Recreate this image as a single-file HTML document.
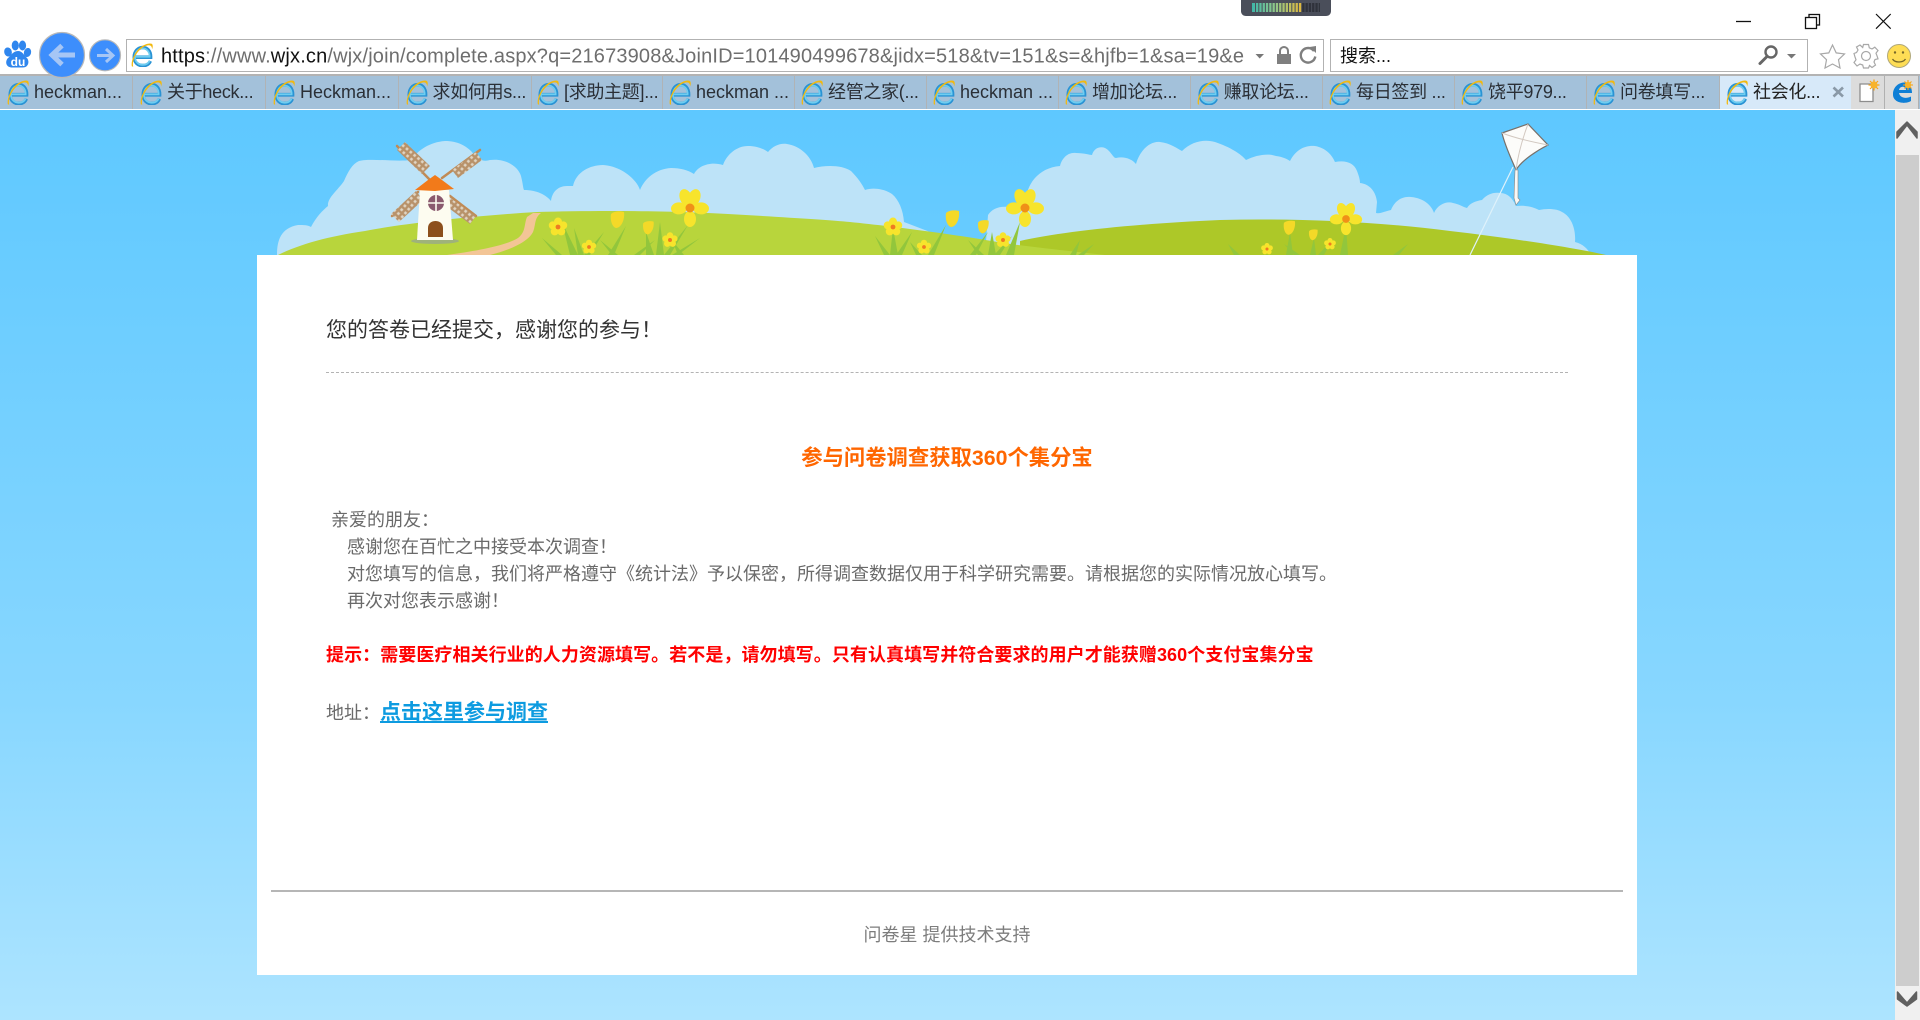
<!DOCTYPE html>
<html lang="zh-CN"><head><meta charset="utf-8"><title>问卷星</title>
<style>
html,body{margin:0;padding:0;width:1920px;height:1020px;overflow:hidden;background:#fff}
body{position:relative;font-family:"Liberation Sans","Noto Sans CJK SC",sans-serif}
.a{position:absolute;white-space:nowrap}
#page{position:absolute;left:0;top:110px;width:1895px;height:910px;background:linear-gradient(#5ec8ff 0%,#88d7ff 65%,#ade4ff 100%)}
#bar{position:absolute;left:0;top:74px;width:1920px;height:35px;background:#a3c1da;border-top:2px solid #b3b3b3;box-sizing:border-box}
.t{position:absolute;top:76px;height:33px;width:131px;border-right:1px solid #b0b3b5;box-sizing:content-box}
.t svg{position:absolute;left:6px;top:4px}
.t span{position:absolute;left:33px;top:3px;font-size:18px;line-height:26px;color:#2a2f36;white-space:nowrap}
.t span.c{letter-spacing:-.3px}
#panel{position:absolute;left:257px;top:255px;width:1380px;height:720px;background:#fff}
</style></head><body>
<div id="page"></div>

<svg class="a" style="left:0;top:0" width="1920" height="1020" viewBox="0 0 1920 1020">
<defs>
<pattern id="grid" width="5" height="5" patternUnits="userSpaceOnUse" patternTransform="rotate(40)"><rect width="5" height="5" fill="#b8926a"/><rect x="1.2" y="1.2" width="2.6" height="2.6" fill="#e0d5c3"/></pattern>
<g id="flw"><g fill="#f7e42c"><ellipse cx="0" cy="-11" rx="6" ry="9" transform="rotate(-22)"/><ellipse cx="0" cy="-11" rx="6" ry="9" transform="rotate(22)"/><ellipse cx="0" cy="-11" rx="6" ry="8" transform="rotate(92)"/><ellipse cx="0" cy="-11" rx="6" ry="8" transform="rotate(-92)"/><ellipse cx="0" cy="11" rx="6" ry="8"/></g><circle r="4.5" fill="#f09018"/></g>
<g id="sf"><g fill="#f7e42c"><circle cy="-5" r="3.6"/><circle cx="4.8" cy="-1.5" r="3.6"/><circle cx="3" cy="4" r="3.6"/><circle cx="-3" cy="4" r="3.6"/><circle cx="-4.8" cy="-1.5" r="3.6"/></g><circle r="2.2" fill="#ef7a22"/></g>
<g id="tul"><path d="M-6-6 C-3-9 3-9 7-8 C8 0 4 8-1 8 C-5 7-7 0-6-6Z" fill="#f4d928"/></g>
<g id="ie">
<path d="M4.700 14.200 H21.500 C21.700 8 17.500 4.500 12.800 4.500 C7.400 4.500 3.400 8.800 3.400 14 C3.400 19.200 7.400 22.600 12.800 22.600 C16.600 22.600 19.800 21 21.200 18" fill="none" stroke="#2a93d4" stroke-width="3.600"/>
<path d="M5 13.700 H20.400 C20.500 8.800 17 5.400 12.800 5.400 C8 5.400 4.300 9.300 4.300 14 C4.300 18.700 8 21.800 12.800 21.800 C16 21.800 19 20.400 20.400 17.800" fill="none" stroke="#6fcdf0" stroke-width="1.800"/>
<path d="M1 23.500 C-.5 19 3.600 9 10.400 4.200 C14.800 1.200 20 -.2 22.600 .8 C24 1.600 24 4 23 6.200 C22.900 3.800 21.800 2.300 19.400 2.300 C14.600 2.300 8.300 7 5 12.400 C2.800 16 1.400 20.600 2.400 23.500 Z" fill="#f2b90f"/>
</g>
</defs>

<!-- clouds -->
<path fill="#bde3f8" d="M277 255 C277 240 281 228 298 225 C304 225 308 225 311 227 C316 217 323 210 328 206 C327 198 338 190 344 181 C348 172 352 164 359 161 C370 158 395 162 411 160 C418 150 430 142 445 141 C458 141 466 146 472 152 C477 160 484 162 490 160 C505 158 518 166 521 176 C523 184 523 188 524 190 C537 190 546 195 551 201 C552 192 558 186 567 186 L573 186 C576 172 590 165 603 165 C620 166 636 178 640 190 C645 178 656 169 671 168 C680 168 688 170 694 174 C698 166 710 161 723 165 C727 154 737 146 748 146 C757 146 764 149 768 152 C773 146 780 143 787 144 C800 146 811 156 814 168 C826 165 842 165 851 171 C858 178 862 184 865 190 C873 187 885 189 892 194 C899 200 903 210 904 222 L990 255 Z"/>
<path fill="#bde3f8" d="M985 255 L988 215 C992 209 999 206 1008 207 L1026 207 C1024 188 1036 168 1060 166 C1062 158 1068 152 1076 153 C1084 153 1090 155 1092 155 C1094 148 1100 146 1105 148 C1111 151 1113 158 1116 158 C1124 156 1132 159 1136 164 C1140 150 1150 141 1160 142 C1170 143 1178 149 1182 151 C1192 141 1205 139 1215 142 C1230 147 1241 154 1246 160 C1256 155 1268 153 1276 156 C1283 157 1287 159 1290 161 C1296 149 1306 145 1315 146 C1326 148 1332 155 1335 162 C1346 160 1354 163 1357 171 C1359 176 1360 180 1360 183 C1370 184 1376 192 1377 202 L1376 213 C1380 214 1386 211 1391 210 C1395 200 1403 196 1411 197 C1424 198 1432 206 1434 213 C1438 204 1447 201 1453 203 C1459 204 1463 207 1467 208 C1470 203 1476 201 1482 200 C1487 194 1494 192 1500 193 C1508 193 1513 199 1516 206 C1526 205 1533 207 1539 210 C1548 208 1558 209 1562 212 C1572 217 1576 230 1575 242 C1583 244 1588 249 1591 255 Z"/>
<!-- hills -->
<path fill="#adc828" d="M1020 255 V241 C1060 232 1130 224 1220 220 C1300 218 1380 222 1450 231 C1510 238 1570 247 1606 255 Z"/>
<path fill="#b8d53c" d="M278 255 C300 244 330 236 365 231 C400 224 470 216 537 212 C600 210 680 211 728 214 C780 217 830 220 850 222 C890 226 960 235 1003 243 C1040 248 1080 252 1105 255 Z"/>
<!-- road -->
<path fill="#f3c596" d="M533 213 L527 217 C524 224 526 232 518 238 C505 246 475 251 447 255 L490 255 C510 250 528 242 533 232 C536 225 534 218 541 213 Z"/>
<!-- grass -->
<g fill="#92c63c">
<path d="M556 255 L542 238 L562 255Z M570 255 L562 222 L578 255Z M578 255 L574 228 L584 255Z M584 255 L604 232 L590 255Z M608 255 L626 226 L614 255Z M612 255 L600 240 L618 255Z M634 255 L655 240 L640 255Z M646 255 L646 232 L654 255Z M656 255 L660 222 L664 255Z M664 255 L688 225 L670 255Z M672 255 L700 238 L678 255Z M678 255 L672 240 L684 255Z"/>
<path d="M884 255 L875 236 L890 255Z M890 255 L893 228 L898 255Z M896 255 L912 232 L902 255Z M928 255 L946 225 L934 255Z M916 255 L910 242 L922 255Z M970 255 L988 232 L976 255Z M978 255 L968 240 L984 255Z M988 255 L992 232 L996 255Z M994 255 L1012 236 L1000 255Z M1006 255 L1020 222 L1014 255Z"/>
<path d="M1070 255 L1080 240 L1076 255Z M1078 255 L1094 244 L1084 255Z M1234 255 L1228 244 L1240 255Z M1286 255 L1290 232 L1293 255Z M1294 255 L1284 244 L1300 255Z M1310 255 L1314 238 L1316 255Z M1318 255 L1332 240 L1324 255Z M1340 255 L1346 226 L1348 255Z M1393 255 L1408 244 L1399 255Z"/>
</g>
<!-- flowers -->
<use href="#flw" x="690" y="208"/><use href="#flw" x="1025" y="208"/><use href="#flw" transform="translate(1346 219) scale(.85)"/>
<use href="#sf" transform="translate(558 227) scale(1.1)"/><use href="#sf" transform="translate(589 247) scale(.85)"/><use href="#sf" transform="translate(670 240) scale(.9)"/><use href="#sf" transform="translate(893 227) scale(1.1)"/><use href="#sf" transform="translate(924 247) scale(.85)"/><use href="#sf" transform="translate(1003 240) scale(.9)"/><use href="#sf" transform="translate(1267 249) scale(.7)"/><use href="#sf" transform="translate(1330 244) scale(.7)"/>
<use href="#tul" x="617" y="220"/><use href="#tul" transform="translate(648 228) scale(.8)"/><use href="#tul" x="952" y="219"/><use href="#tul" transform="translate(983 227) scale(.8)"/><use href="#tul" transform="translate(1289 228) scale(.85)"/><use href="#tul" transform="translate(1313 235) scale(.65)"/>
<!-- windmill -->
<g stroke="#c08a55" stroke-width="2.500" stroke-linecap="round"><path d="M430 180 L397 146 M442 178 L480 150 M418 192 L392 216 M450 196 L476 216"/></g>
<polygon points="397,150 405,142 430,166 422,174" fill="url(#grid)"/>
<polygon points="452,170 476,152 482,160 458,178" fill="url(#grid)"/>
<polygon points="391,214 416,191 423,200 399,222" fill="url(#grid)"/>
<polygon points="450,198 476,216 470,224 446,206" fill="url(#grid)"/>
<ellipse cx="435" cy="241" rx="24" ry="3" fill="#9fb27a"/>
<polygon points="420,190 449,190 453,240 417,240" fill="#fdfcf0"/>
<polygon points="415,190 428,180 435,175 442,180 454,189 435,191" fill="#f27a1a"/>
<circle cx="436" cy="203" r="8" fill="#8a5a6e"/><path d="M436 195 V211 M428 203 H444" stroke="#fdfcf0" stroke-width="1.600"/>
<path d="M428 237 V228 C428 223 432 221 435.500 221 C439 221 443 223 443 228 V237 Z" fill="#8c4f1c"/>
<!-- kite -->
<path d="M1513 167 L1470 255" stroke="#dff2fb" stroke-width="1.200" fill="none"/>
<path d="M1502 133 L1528 124 L1548 145 C1538 150 1522 160 1516 170 C1511 158 1505 146 1502 133 Z" fill="#fcfcfa" stroke="#77706a" stroke-width="1.200"/>
<path d="M1502 133 C1515 138 1532 142 1548 145 M1528 124 C1522 140 1518 155 1516 170" stroke="#d2c8c0" stroke-width="1" fill="none"/>
<path d="M1515 170 L1518 170 L1518 198 L1520 200 L1516 205 L1514 198 Z" fill="#f8f8f6" stroke="#8a8580" stroke-width=".6"/>
</svg>

<div id="panel"></div>
<div class="a" style="left:326px;top:315.500px;font-size:21px;line-height:30px;color:#333">您的答卷已经提交，感谢您的参与！</div>
<div class="a" style="left:326px;top:372px;width:1242px;height:0;border-top:1.500px dashed #b3b3b3"></div>
<div class="a" style="left:257px;width:1380px;text-align:center;top:442px;font-size:21.330px;line-height:32px;font-weight:700;color:#ff6600">参与问卷调查获取360个集分宝</div>
<div class="a" style="left:331px;top:507px;font-size:18px;line-height:27px;color:#6a6a6a">亲爱的朋友：</div>
<div class="a" style="left:347px;top:534px;font-size:18px;line-height:27px;color:#6a6a6a">感谢您在百忙之中接受本次调查！</div>
<div class="a" style="left:347px;top:561px;font-size:18px;line-height:27px;color:#6a6a6a">对您填写的信息，我们将严格遵守《统计法》予以保密，所得调查数据仅用于科学研究需要。请根据您的实际情况放心填写。</div>
<div class="a" style="left:347px;top:588px;font-size:18px;line-height:27px;color:#6a6a6a">再次对您表示感谢！</div>
<div class="a" style="left:326px;top:642px;font-size:18px;line-height:27px;font-weight:700;color:#ff0000;letter-spacing:.065px">提示：需要医疗相关行业的人力资源填写。若不是，请勿填写。只有认真填写并符合要求的用户才能获赠360个支付宝集分宝</div>
<div class="a" style="left:326px;top:700px;font-size:18px;line-height:27px;color:#6a6a6a">地址：</div>
<div class="a" style="left:380px;top:698px;font-size:21px;line-height:30px;font-weight:700;color:#0d9be0;text-decoration:underline">点击这里参与调查</div>
<div class="a" style="left:271px;top:890px;width:1352px;height:2px;background:#b6b6b6"></div>
<div class="a" style="left:257px;width:1380px;text-align:center;top:922px;font-size:18px;line-height:27px;color:#7d7d7d">问卷星 提供技术支持</div>

<!-- scrollbar -->
<div class="a" style="left:1895px;top:110px;width:25px;height:910px;background:#f0f0f0"></div>
<div class="a" style="left:1896px;top:155px;width:23px;height:831px;background:#cdcdcd"></div>
<svg class="a" style="left:1895px;top:110px" width="25" height="910"><path d="M2 28 L12 15 L22 28 L22 22 L12 12 L2 22Z" fill="#606060" stroke="#606060" stroke-width="1.500" stroke-linejoin="round"/><path d="M2.500 882 L12 893 L21.500 882 L21.500 889 L12 896 L2.500 889Z" fill="#606060" stroke="#606060" stroke-width="1.500" stroke-linejoin="round"/></svg>

<!-- tab bar -->
<div id="bar"></div>
<div class="a" style="left:0;top:109px;width:1920px;height:1px;background:#fff"></div>
<div class="t" style="left:1px"><svg width="22" height="25" viewBox="0 0 24 24" preserveAspectRatio="none"><use href="#ie"/></svg><span>heckman...</span></div>
<div class="t" style="left:134px"><svg width="22" height="25" viewBox="0 0 24 24" preserveAspectRatio="none"><use href="#ie"/></svg><span class="c">关于heck...</span></div>
<div class="t" style="left:267px"><svg width="22" height="25" viewBox="0 0 24 24" preserveAspectRatio="none"><use href="#ie"/></svg><span>Heckman...</span></div>
<div class="t" style="left:399.500px"><svg width="22" height="25" viewBox="0 0 24 24" preserveAspectRatio="none"><use href="#ie"/></svg><span class="c">求如何用s...</span></div>
<div class="t" style="left:531px"><svg width="22" height="25" viewBox="0 0 24 24" preserveAspectRatio="none"><use href="#ie"/></svg><span class="c">[求助主题]...</span></div>
<div class="t" style="left:663px"><svg width="22" height="25" viewBox="0 0 24 24" preserveAspectRatio="none"><use href="#ie"/></svg><span>heckman ...</span></div>
<div class="t" style="left:795px"><svg width="22" height="25" viewBox="0 0 24 24" preserveAspectRatio="none"><use href="#ie"/></svg><span class="c">经管之家(...</span></div>
<div class="t" style="left:927px"><svg width="22" height="25" viewBox="0 0 24 24" preserveAspectRatio="none"><use href="#ie"/></svg><span>heckman ...</span></div>
<div class="t" style="left:1059px"><svg width="22" height="25" viewBox="0 0 24 24" preserveAspectRatio="none"><use href="#ie"/></svg><span class="c">增加论坛...</span></div>
<div class="t" style="left:1190.700px"><svg width="22" height="25" viewBox="0 0 24 24" preserveAspectRatio="none"><use href="#ie"/></svg><span class="c">赚取论坛...</span></div>
<div class="t" style="left:1323px"><svg width="22" height="25" viewBox="0 0 24 24" preserveAspectRatio="none"><use href="#ie"/></svg><span class="c">每日签到 ...</span></div>
<div class="t" style="left:1455px"><svg width="22" height="25" viewBox="0 0 24 24" preserveAspectRatio="none"><use href="#ie"/></svg><span class="c">饶平979...</span></div>
<div class="t" style="left:1587px;border-right:0;width:132px"><svg width="22" height="25" viewBox="0 0 24 24" preserveAspectRatio="none"><use href="#ie"/></svg><span class="c">问卷填写...</span></div>
<div class="t" style="left:1719px;width:131px;background:#d7e9f9;border-left:1px solid #b0b3b5;border-right:1px solid #b0b3b5"><svg width="22" height="25" viewBox="0 0 24 24" preserveAspectRatio="none"><use href="#ie"/></svg><span class="c" style="color:#222">社会化...</span></div>
<div class="a" style="left:1851px;top:76px;width:33px;height:33px;background:#dcdcdc;border-right:1px solid #b0b0b0"></div>
<div class="a" style="left:1885px;top:76px;width:33px;height:33px;background:#dcdcdc;border-right:1px solid #b0b0b0"></div>

<!-- address + search boxes -->
<div class="a" style="left:126px;top:39px;width:1198px;height:33px;box-sizing:border-box;border:1.500px solid #b2b2b2;background:#fff"></div>
<div class="a" style="left:1330px;top:39px;width:478px;height:33px;box-sizing:border-box;border:1.500px solid #b2b2b2;background:#fff"></div>
<div class="a" style="left:1340px;top:42px;font-size:18px;line-height:28px;color:#111">搜索...</div>

<svg class="a" style="left:0;top:0" width="1920" height="115" viewBox="0 0 1920 115">
<text x="161" y="62.500" font-family="Liberation Sans" font-size="20" fill="#6e6e6e" textLength="1083" lengthAdjust="spacing"><tspan fill="#111">https</tspan>://www.<tspan fill="#111">wjx.cn</tspan>/wjx/join/complete.aspx?q=21673908&amp;JoinID=101490499678&amp;jidx=518&amp;tv=151&amp;s=&amp;hjfb=1&amp;sa=19&amp;e</text>
<!-- notch -->
<path d="M1241 0 H1331 V11 C1331 14 1329 16 1326 16 H1246 C1243 16 1241 14 1241 11 Z" fill="#4a4e5a"/>
<defs><linearGradient id="led"><stop offset="0" stop-color="#3fb6a8"/><stop offset=".45" stop-color="#8ec88a"/><stop offset="1" stop-color="#e0b83c"/></linearGradient></defs>
<rect x="1252" y="3" width="50" height="9" fill="url(#led)"/>
<rect x="1302" y="3" width="18" height="9" fill="#2f323b"/>
<g stroke="#4a4e5a" stroke-width="1"><path d="M1255.500 3v9M1258.800 3v9M1262.100 3v9M1265.400 3v9M1268.700 3v9M1272 3v9M1275.300 3v9M1278.600 3v9M1281.900 3v9M1285.200 3v9M1288.500 3v9M1291.800 3v9M1295.100 3v9M1298.400 3v9M1301.700 3v9M1305 3v9M1308.300 3v9M1311.600 3v9M1314.900 3v9M1318.200 3v9"/></g>
<!-- window buttons -->
<path d="M1736 21.500 H1751" stroke="#111" stroke-width="1.300"/>
<g fill="#fff" stroke="#111" stroke-width="1.300"><rect x="1809" y="14.500" width="10.500" height="10.500"/><rect x="1805.500" y="17.500" width="11" height="11"/></g>
<path d="M1876 14 L1890.700 28.700 M1890.700 14 L1876 28.700" stroke="#111" stroke-width="1.200"/>
<!-- baidu -->
<g fill="#2f86ee"><ellipse cx="8" cy="52" rx="3.800" ry="4.600" transform="rotate(-15 8 52)"/><ellipse cx="15.300" cy="45.500" rx="3.600" ry="5"/><ellipse cx="22.500" cy="45.500" rx="3.600" ry="5"/><ellipse cx="27.500" cy="52.500" rx="3.600" ry="4.600" transform="rotate(15 27.500 52.500)"/><path d="M18 51 C22 51 24 55 27 58 C30 62 28 67.500 23 67.500 L12 67.500 C7 67.500 4.500 63 7.500 58.500 C11 55.500 13 51 18 51Z"/></g>
<text x="18" y="66" font-family="Liberation Sans" font-size="12" font-weight="700" fill="#fff" text-anchor="middle">du</text>
<!-- nav -->
<circle cx="62" cy="55" r="22.500" fill="#3d8efc" stroke="#b9b9b9" stroke-width="1.200"/>
<path d="M75 55 H54 M62 45.500 L52 55 L62 64.500" fill="none" stroke="#a6c6f5" stroke-width="5" stroke-linejoin="miter"/>
<circle cx="105" cy="55.300" r="15.500" fill="#3d8efc" stroke="#b9b9b9" stroke-width="1.200"/>
<path d="M97 55.500 H112 M106 49 L113 55.500 L106 62" fill="none" stroke="#a6c6f5" stroke-width="3"/>
<svg x="131" y="43" width="22" height="24" viewBox="0 0 24 24" preserveAspectRatio="none"><use href="#ie"/></svg>
<!-- address right -->
<path d="M1255.500 54 H1264 L1259.700 58.500Z" fill="#777"/>
<path d="M1277 54 H1291 V64 H1277Z" fill="#7f7f7f"/><path d="M1280 54 V51 C1280 48.500 1282 47 1284 47 C1286 47 1288 48.500 1288 51 V54" fill="none" stroke="#7f7f7f" stroke-width="2"/>
<path d="M1314 51 A7.300 7.300 0 1 0 1315.300 56.500" fill="none" stroke="#7f7f7f" stroke-width="2.400"/><path d="M1309.500 47 L1316 46 L1316 53Z" fill="#7f7f7f"/>
<!-- search -->
<circle cx="1771" cy="52" r="5.500" fill="none" stroke="#666" stroke-width="2.400"/><path d="M1767 56.500 L1760 63.500" stroke="#666" stroke-width="3" stroke-linecap="round"/>
<path d="M1787 54 H1796 L1791.500 58.500Z" fill="#777"/>
<!-- star -->
<path d="M1832.500 45 L1836.200 52.900 L1844.500 53.900 L1838.500 59.700 L1840 68 L1832.500 64 L1825 68 L1826.500 59.700 L1820.500 53.900 L1828.800 52.900Z" fill="#fff" stroke="#a8a8a8" stroke-width="1.200"/>
<!-- gear -->
<g transform="translate(1866 56)" fill="none" stroke="#a8a8a8" stroke-width="1.200">
<path d="M-2.500-11.500 H2.500 L3.300-8.200 L6-7 L8.800-8.800 L12-5.500 L10-2.800 L11-.2 L12 2.800 L9 3.500 L8 6 L9.500 9 L6 11.500 L3.500 9.500 L2.500 12 H-2.500 L-3.300 9 L-6 8 L-9 10 L-12 6.500 L-10 3.800 L-11 1 L-12-2.500 L-9.500-3.500 L-8-6 L-9.500-9 L-6-11 L-3.300-8.500Z"/>
<circle r="4.500"/></g>
<!-- smile -->
<circle cx="1899" cy="56" r="11.500" fill="#fedd55" stroke="#b0a87a" stroke-width="1"/>
<circle cx="1895" cy="52.500" r="1.200" fill="#77692a"/><circle cx="1903" cy="52.500" r="1.200" fill="#77692a"/>
<path d="M1892.500 59 C1895 63 1903 63 1905.500 59" fill="none" stroke="#77692a" stroke-width="1.300"/>
<!-- active close -->
<path d="M1833.500 87.500 L1843 96.500 M1843 87.500 L1833.500 96.500" stroke="#8a99a7" stroke-width="2.600"/>
<!-- new tab -->
<path d="M1860 84 H1873 V101.500 H1860Z" fill="#fff" stroke="#8d8d8d" stroke-width="1.300"/>
<g stroke="#f5a216" stroke-width="1.200"><path d="M1874 79.500 V90.500 M1868.500 85 H1879.500 M1870 81 L1878 89 M1878 81 L1870 89"/></g><circle cx="1874" cy="85" r="3.600" fill="#f8b32a"/>
<!-- edge -->
<path d="M1893 94 C1893 87 1899 82.500 1904 82.500 C1909 82.500 1912 87 1912 93 L1899 93 C1900 98 1906 99 1911 96.500 V101 C1904 105 1892.500 102.500 1893 94 Z M1899 90 H1906 C1906 86 1900 85.500 1899 90Z" fill="#0f7fd6" fill-rule="evenodd"/>
<g stroke="#f5a216" stroke-width="1.100"><path d="M1908 80 V90 M1903 85 H1913 M1904.500 81.500 L1911.500 88.500 M1911.500 81.500 L1904.500 88.500"/></g><circle cx="1908" cy="85" r="3.200" fill="#f8b32a"/>
</svg>
</body></html>
